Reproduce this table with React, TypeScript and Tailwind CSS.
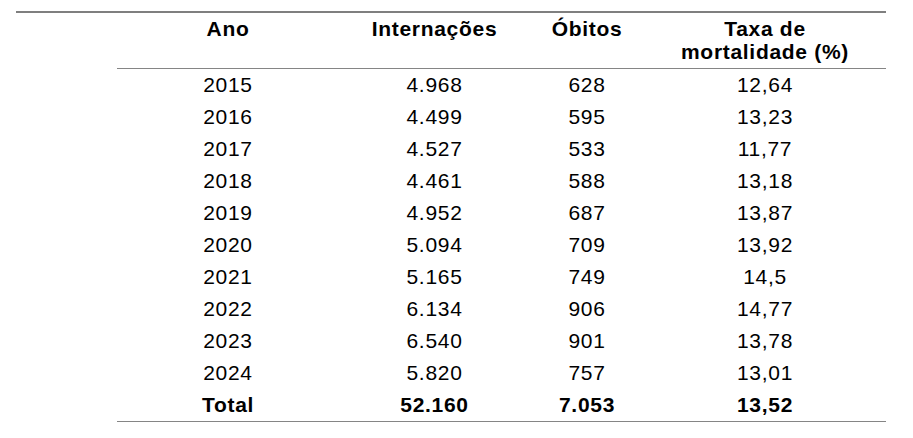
const rows = [
  ["2015", "4.968", "628", "12,64"],
  ["2016", "4.499", "595", "13,23"],
  ["2017", "4.527", "533", "11,77"],
  ["2018", "4.461", "588", "13,18"],
  ["2019", "4.952", "687", "13,87"],
  ["2020", "5.094", "709", "13,92"],
  ["2021", "5.165", "749", "14,5"],
  ["2022", "6.134", "906", "14,77"],
  ["2023", "6.540", "901", "13,78"],
  ["2024", "5.820", "757", "13,01"],
];

export default function App() {
  return (
    <div className="w-[913px] h-[438px] bg-white pt-[11px] text-black font-['Liberation_Sans',Arial,sans-serif]">
      {/* top rule */}
      <div className="ml-[16px] w-[870px] h-[2px] bg-[#7f7f7f]" />

      <table className="ml-[117px] w-[769px] table-fixed border-collapse text-[21px] tracking-[0.7px]">
        <colgroup>
          <col className="w-[222px]" />
          <col className="w-[191px]" />
          <col className="w-[114px]" />
          <col className="w-[242px]" />
        </colgroup>
        <thead>
          <tr className="border-b border-[#858585] align-top font-bold leading-[23px]">
            <th className="pt-[4px] pb-[5px]">Ano</th>
            <th className="pt-[4px] pb-[5px]">Internações</th>
            <th className="pt-[4px] pb-[5px]">Óbitos</th>
            <th className="pt-[4px] pb-[5px]">
              Taxa de
              <br />
              mortalidade (%)
            </th>
          </tr>
        </thead>
        <tbody className="text-center leading-[32px]">
          {rows.map((r) => (
            <tr key={r[0]}>
              {r.map((c, i) => (
                <td key={i} className="p-0">
                  {c}
                </td>
              ))}
            </tr>
          ))}
          <tr className="border-b border-[#858585] font-bold">
            <td className="p-0">Total</td>
            <td className="p-0">52.160</td>
            <td className="p-0">7.053</td>
            <td className="p-0">13,52</td>
          </tr>
        </tbody>
      </table>
    </div>
  );
}
